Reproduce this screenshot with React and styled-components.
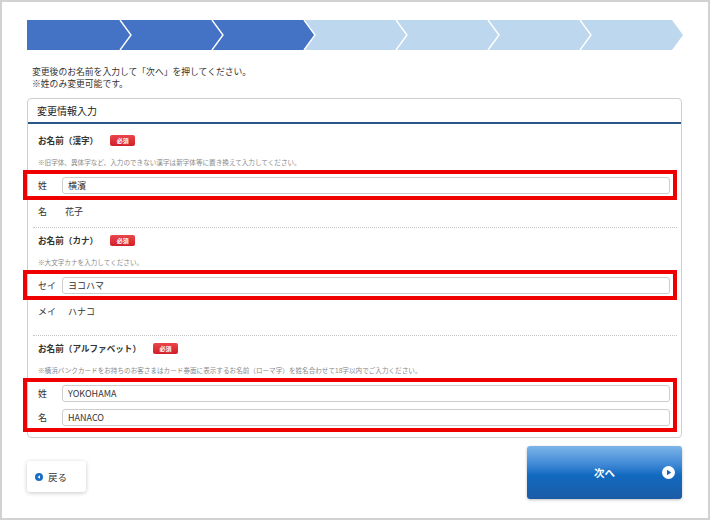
import styled, { createGlobalStyle } from "styled-components";

const GlobalStyle = createGlobalStyle`
  html, body { margin: 0; padding: 0; background: #fff; }
  body {
    font-family: "Noto Sans CJK JP", "Noto Sans", sans-serif;
    color: #333;
  }
  * { box-sizing: border-box; }
`;

const STEP_COUNT = 7;
const ACTIVE_STEPS = 3;

function StepBar() {
  const w = 656;
  const h = 30;
  const d = 11;
  const first = 93;
  const period = (645 - first) / 6;
  const cuts = [];
  for (let i = 0; i < STEP_COUNT - 1; i++) cuts.push(first + i * period);
  const polys = [];
  for (let i = 0; i < STEP_COUNT; i++) {
    const s = i === 0 ? null : cuts[i - 1];
    const e = i === STEP_COUNT - 1 ? 645 : cuts[i];
    const left = s === null ? `0,${h} 0,0` : `${s},${h} ${s + d},${h / 2} ${s},0`;
    const pts = `${left} ${e},0 ${e + d},${h / 2} ${e},${h}`;
    polys.push(
      <polygon key={i} points={pts} fill={i < ACTIVE_STEPS ? "#4472c4" : "#bdd7ee"} />
    );
  }
  return (
    <StepSvg width={w} height={h} viewBox={`0 0 ${w} ${h}`}>
      {polys}
      {cuts.map((c, i) => (
        <polyline
          key={i}
          points={`${c},0 ${c + d},${h / 2} ${c},${h}`}
          fill="none"
          stroke="#fff"
          strokeWidth="1.4"
        />
      ))}
    </StepSvg>
  );
}

function BackIcon() {
  return (
    <svg width="8" height="8" viewBox="0 0 8 8">
      <circle cx="4" cy="4" r="4" fill="#1a6ec4" />
      <polygon points="5,2.3 2.6,4 5,5.7" fill="#fff" />
    </svg>
  );
}

function NextIcon() {
  return (
    <svg width="13" height="13" viewBox="0 0 13 13">
      <circle cx="6.5" cy="6.5" r="6.5" fill="#fff" />
      <polygon points="5,3.8 9.2,6.5 5,9.2" fill="#1a64b8" />
    </svg>
  );
}

export default function App() {
  return (
    <>
      <GlobalStyle />
      <Frame>
        <StepBar />
        <Intro>
          変更後のお名前を入力して「次へ」を押してください。
          <br />
          ※姓のみ変更可能です。
        </Intro>
        <Card>
          <CardHeader>変更情報入力</CardHeader>

          <Section $top={9} $bottom={8}>
            <TitleRow>
              <Title>お名前（漢字）</Title>
              <Badge>必須</Badge>
            </TitleRow>
            <Note>※旧字体、異体字など、入力のできない漢字は新字体等に置き換えて入力してください。</Note>
            <Highlight>
              <FieldRow>
                <Label>姓</Label>
                <Input defaultValue="横濱" />
              </FieldRow>
            </Highlight>
            <PlainRow>
              <Label>名</Label>
              <Value>花子</Value>
            </PlainRow>
          </Section>

          <Section $top={5} $bottom={16}>
            <TitleRow>
              <Title>お名前（カナ）</Title>
              <Badge>必須</Badge>
            </TitleRow>
            <Note>※大文字カナを入力してください。</Note>
            <Highlight>
              <FieldRow>
                <Label>セイ</Label>
                <Input defaultValue="ヨコハマ" />
              </FieldRow>
            </Highlight>
            <PlainRow>
              <Label>メイ</Label>
              <Value $pad={6}>ハナコ</Value>
            </PlainRow>
          </Section>

          <Section $top={5} $bottom={5} $last>
            <TitleRow>
              <Title>お名前（アルファベット）</Title>
              <Badge>必須</Badge>
            </TitleRow>
            <Note>
              ※横浜バンクカードをお持ちのお客さまはカード券面に表示するお名前（ローマ字）を姓名合わせて18字以内でご入力ください。
            </Note>
            <Highlight $gap={2}>
              <FieldRow>
                <Label>姓</Label>
                <Input defaultValue="YOKOHAMA" />
              </FieldRow>
              <FieldRow>
                <Label>名</Label>
                <Input defaultValue="HANACO" />
              </FieldRow>
            </Highlight>
          </Section>
        </Card>

        <Footer>
          <BackButton>
            <BackIcon />
            <span>戻る</span>
          </BackButton>
          <NextButton>
            <span />
            <NextLabel>次へ</NextLabel>
            <NextIconWrap>
              <NextIcon />
            </NextIconWrap>
          </NextButton>
        </Footer>
      </Frame>
    </>
  );
}

const Frame = styled.div`
  width: 710px;
  height: 520px;
  border: 2px solid #d2d2d2;
  padding: 18px 25px 0 25px;
  overflow: hidden;
`;

const StepSvg = styled.svg`
  display: block;
`;

const Intro = styled.p`
  margin: 16px 0 0 5px;
  font-size: 8.8px;
  line-height: 11.5px;
  color: #333;
`;

const Card = styled.div`
  width: 655px;
  margin-top: 9px;
  border: 1px solid #cfcfcf;
  border-radius: 4px;
`;

const CardHeader = styled.div`
  height: 25px;
  padding-left: 9px;
  line-height: 23px;
  font-size: 10px;
  color: #222;
  border-bottom: 2px solid #2b5788;
`;

const Section = styled.div`
  margin: 0 4px 0 5px;
  padding: ${(p) => p.$top}px 0 ${(p) => p.$bottom}px 5px;
  border-bottom: ${(p) => (p.$last ? "none" : "1px dotted #c4c4c4")};
`;

const TitleRow = styled.div`
  display: flex;
  align-items: center;
  height: 14px;
`;

const Title = styled.span`
  font-size: 8.6px;
  font-weight: bold;
  color: #333;
`;

const Badge = styled.span`
  display: inline-flex;
  align-items: center;
  justify-content: center;
  width: 25px;
  height: 11px;
  margin-left: 12px;
  border-radius: 2px;
  background: linear-gradient(#e8474c, #d21f27);
  color: #fff;
  font-size: 6px;
  font-weight: bold;
`;

const Note = styled.div`
  margin-top: 10px;
  font-size: 6.6px;
  line-height: 10px;
  color: #8a8a8a;
  white-space: nowrap;
`;

const Highlight = styled.div`
  display: flex;
  flex-direction: column;
  gap: ${(p) => p.$gap || 0}px;
  margin: 3px 0 0 -15px;
  border: 4px solid #ee0000;
  padding: 0 3px 0 11px;
`;

const FieldRow = styled.div`
  display: flex;
  align-items: center;
  height: 22px;
`;

const Label = styled.span`
  width: 24px;
  flex: none;
  font-size: 9px;
  color: #333;
`;

const Input = styled.input`
  flex: 1;
  height: 17px;
  border: 1px solid #cdcdcd;
  border-radius: 3px;
  padding: 0 5px;
  font-family: inherit;
  font-size: 9px;
  color: #333;
  background: #fff;
  outline: none;
`;

const PlainRow = styled.div`
  display: flex;
  align-items: center;
  height: 16px;
  margin-top: 3px;
`;

const Value = styled.span`
  padding-left: ${(p) => p.$pad || 3}px;
  font-size: 9px;
  color: #333;
`;

const Footer = styled.div`
  display: flex;
  justify-content: space-between;
  align-items: flex-start;
  padding-right: 1px;
`;

const BackButton = styled.button`
  display: flex;
  align-items: center;
  gap: 5px;
  width: 59px;
  height: 31px;
  margin-top: 23px;
  padding: 0 0 0 8px;
  border: none;
  border-radius: 3px;
  background: #fff;
  box-shadow: 0 1px 4px rgba(0, 0, 0, 0.22);
  font-family: inherit;
  font-size: 9.5px;
  color: #333;
`;

const NextButton = styled.button`
  display: grid;
  grid-template-columns: 1fr auto 1fr;
  align-items: center;
  width: 155px;
  height: 53px;
  margin-top: 8px;
  padding: 0;
  border: none;
  border-radius: 3px;
  background: linear-gradient(#7db5e8 0%, #3f88d6 35%, #126abf 55%, #1b5ba6 100%);
  box-shadow: 0 1px 3px rgba(0, 0, 0, 0.25);
  font-family: inherit;
  color: #fff;
`;

const NextLabel = styled.span`
  font-size: 10.5px;
  font-weight: bold;
`;

const NextIconWrap = styled.span`
  display: flex;
  justify-content: flex-end;
  padding-right: 7px;
`;
